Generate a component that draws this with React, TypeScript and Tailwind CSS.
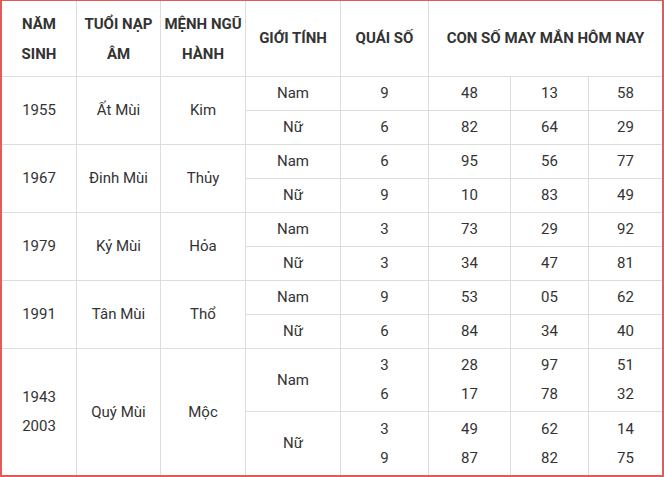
import React from "react";

type Sub = { g: string; q: string[]; n: string[][] };
type Group = { year: string[]; tuoi: string; menh: string; subs: Sub[] };

const groups: Group[] = [
  { year: ["1955"], tuoi: "Ất Mùi", menh: "Kim", subs: [
    { g: "Nam", q: ["9"], n: [["48"], ["13"], ["58"]] },
    { g: "Nữ", q: ["6"], n: [["82"], ["64"], ["29"]] },
  ] },
  { year: ["1967"], tuoi: "Đinh Mùi", menh: "Thủy", subs: [
    { g: "Nam", q: ["6"], n: [["95"], ["56"], ["77"]] },
    { g: "Nữ", q: ["9"], n: [["10"], ["83"], ["49"]] },
  ] },
  { year: ["1979"], tuoi: "Kỷ Mùi", menh: "Hỏa", subs: [
    { g: "Nam", q: ["3"], n: [["73"], ["29"], ["92"]] },
    { g: "Nữ", q: ["3"], n: [["34"], ["47"], ["81"]] },
  ] },
  { year: ["1991"], tuoi: "Tân Mùi", menh: "Thổ", subs: [
    { g: "Nam", q: ["9"], n: [["53"], ["05"], ["62"]] },
    { g: "Nữ", q: ["6"], n: [["84"], ["34"], ["40"]] },
  ] },
  { year: ["1943", "2003"], tuoi: "Quý Mùi", menh: "Mộc", subs: [
    { g: "Nam", q: ["3", "6"], n: [["28", "17"], ["97", "78"], ["51", "32"]] },
    { g: "Nữ", q: ["3", "9"], n: [["49", "87"], ["62", "82"], ["14", "75"]] },
  ] },
];

function Cell({
  children,
  last,
  bottom,
  span,
  className = "",
}: {
  children: React.ReactNode;
  last?: boolean;
  bottom?: boolean;
  span?: boolean;
  className?: string;
}) {
  return (
    <div
      className={[
        "flex flex-col items-center justify-center text-center border-[#dddddd]",
        last ? "" : "border-r",
        bottom ? "" : "border-b",
        span ? "row-span-2" : "",
        className,
      ].join(" ")}
    >
      {children}
    </div>
  );
}

function Lines({ items }: { items: string[] }) {
  return (
    <>
      {items.map((t, i) => (
        <span key={i} className="block leading-[29px]">
          {t}
        </span>
      ))}
    </>
  );
}

export default function App() {
  return (
    <div
      className="w-[664px] h-[477px] bg-white border-t border-l-2 border-r-2 border-b-2 border-[#e25b5b] text-[15px] text-[#333333]"
      style={{ fontFamily: "Roboto, 'Liberation Sans', sans-serif" }}
    >
      <div className="grid grid-cols-[75px_84px_85px_95px_88px_82px_78px_73px] grid-rows-[76px_34px_34px_34px_34px_34px_34px_34px_34px_63px_63px] h-full">
        <Cell className="font-bold leading-[30px]">
          <span>NĂM</span>
          <span>SINH</span>
        </Cell>
        <Cell className="font-bold leading-[30px]">
          <span>TUỔI NẠP</span>
          <span>ÂM</span>
        </Cell>
        <Cell className="font-bold leading-[30px]">
          <span>MỆNH NGŨ</span>
          <span>HÀNH</span>
        </Cell>
        <Cell className="font-bold">GIỚI TÍNH</Cell>
        <Cell className="font-bold">QUÁI SỐ</Cell>
        <Cell last className="font-bold col-span-3">
          CON SỐ MAY MẮN HÔM NAY
        </Cell>
        {groups.map((gr, gi) => {
          const lastGroup = gi === groups.length - 1;
          return (
            <React.Fragment key={gi}>
              <Cell span bottom={lastGroup}>
                <Lines items={gr.year} />
              </Cell>
              <Cell span bottom={lastGroup}>{gr.tuoi}</Cell>
              <Cell span bottom={lastGroup}>{gr.menh}</Cell>
              {gr.subs.map((s, si) => {
                const b = lastGroup && si === 1;
                return (
                  <React.Fragment key={si}>
                    <Cell bottom={b}>{s.g}</Cell>
                    <Cell bottom={b}>
                      <Lines items={s.q} />
                    </Cell>
                    {s.n.map((col, ci) => (
                      <Cell key={ci} bottom={b} last={ci === 2}>
                        <Lines items={col} />
                      </Cell>
                    ))}
                  </React.Fragment>
                );
              })}
            </React.Fragment>
          );
        })}
      </div>
    </div>
  );
}
